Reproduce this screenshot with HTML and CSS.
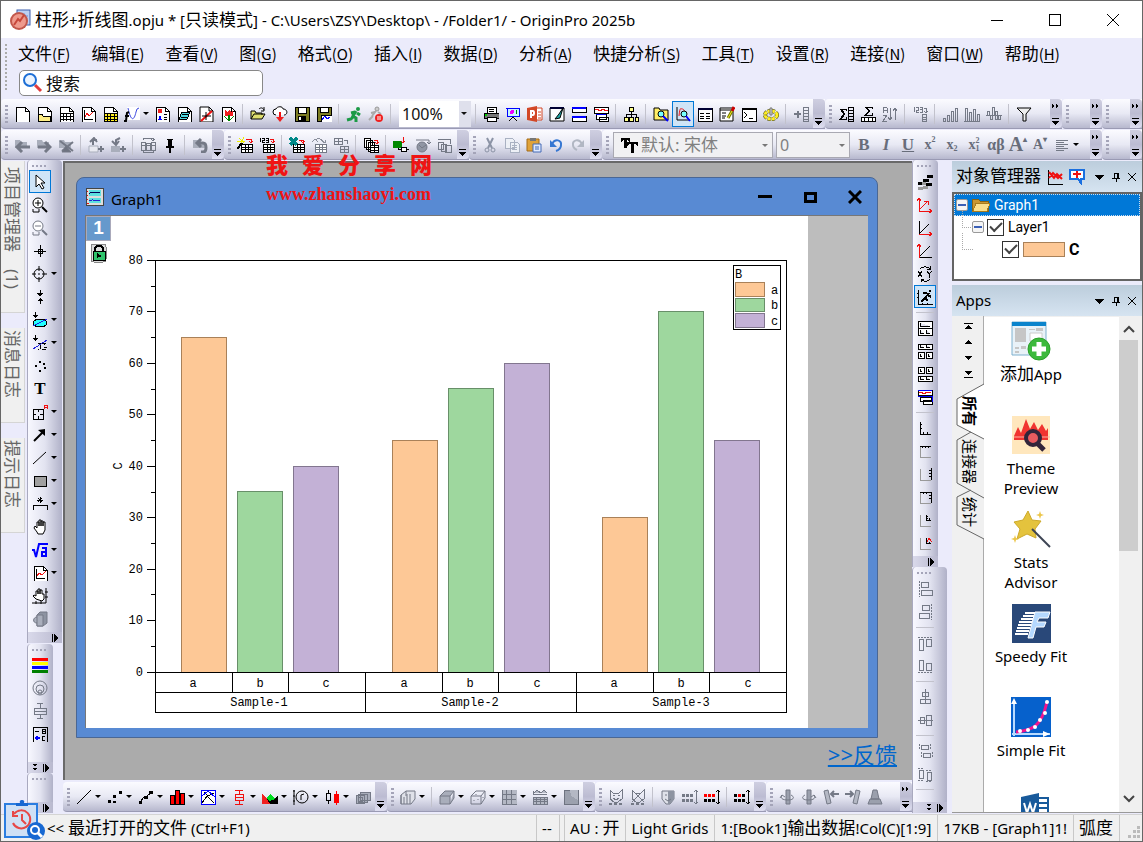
FILE: index.html
```html
<!DOCTYPE html>
<html lang="zh-CN">
<head>
<meta charset="utf-8">
<title>OriginPro 2025b</title>
<link rel="stylesheet" href="styles.css">
</head>
<body>
<svg class="defs" aria-hidden="true">
  <symbol id="doc" viewBox="0 0 16 16"><path class="w" d="M2 1h9l4 4v11H2z"/><path d="M11 1v4h4"/></symbol>
  <symbol id="folder" viewBox="0 0 16 16"><path d="M1 3h5l1 2h6v6H1z" fill="#a9aebb" stroke="none"/></symbol>
  <symbol id="mini" viewBox="0 0 16 16"><path class="w" d="M4 7h11v8H4zM4 10h11M4 12h11M8 7v8M11 7v8"/></symbol>
  <symbol id="more" viewBox="0 0 10 8"><path d="M1 1h7" /><path class="k" d="M1 4h7L4.500 8z"/></symbol>
  <symbol id="chev" viewBox="0 0 10 8"><path class="k" d="M1 1l3 2-3 2zM5 1l3 2-3 2z"/></symbol>
  <symbol id="side" viewBox="0 0 10 8"><path d="M2 0v8"/><path class="k" d="M4 0l4 4-4 4z"/></symbol>
</svg>
<div class="app">
<header class="title">
  <svg class="logo" width="22" height="22"><rect x="8" y="1" width="13" height="15" fill="#bcd0f3" stroke="#3c5fae"/><path d="M15 4v9M11 7h8" stroke="#6f8fd6"/><circle cx="10" cy="12" r="9" fill="#c2574b" stroke="none"/><circle cx="10" cy="12" r="7" fill="#ee9a8d" stroke="none"/><path d="M5 16l4-6 2 2 4-6" stroke="#c7473b" stroke-width="2" fill="none"/></svg>
  <h1><span class="zh">柱形</span>+<span class="zh">折线图</span>.opju * [<span class="zh">只读模式</span>] - C:\Users\ZSY\Desktop\ - /Folder1/ - OriginPro 2025b</h1>
  <button class="wb" aria-label="最小化"><svg width="14" height="14"><path d="M1 7h12"/></svg></button>
  <button class="wb" aria-label="最大化"><svg width="14" height="14"><path d="M1 1h11v11H1z"/></svg></button>
  <button class="wb x" aria-label="关闭"><svg width="14" height="14"><path d="M1 1l12 12M13 1L1 13"/></svg></button>
</header>

<div class="menus">
  <nav class="menubar">
    <button>文件<span>(<u>F</u>)</span></button><button>编辑<span>(<u>E</u>)</span></button><button>查看<span>(<u>V</u>)</span></button><button>图<span>(<u>G</u>)</span></button><button>格式<span>(<u>O</u>)</span></button><button>插入<span>(<u>I</u>)</span></button><button>数据<span>(<u>D</u>)</span></button><button>分析<span>(<u>A</u>)</span></button><button>快捷分析<span>(<u>S</u>)</span></button><button>工具<span>(<u>T</u>)</span></button><button>设置<span>(<u>R</u>)</span></button><button>连接<span>(<u>N</u>)</span></button><button>窗口<span>(<u>W</u>)</span></button><button>帮助<span>(<u>H</u>)</span></button>
  </nav>
  <label class="search"><svg width="20" height="20"><path d="M12 12l6 6" stroke="#e23b3b" stroke-width="3"/><circle cx="7" cy="7" r="6" fill="#eaf4ff" stroke="#1d6fd6" stroke-width="2"/></svg><input type="text" placeholder="搜索" aria-label="搜索"></label>
</div>

<div class="row">
  <div class="tb">
    <button class="b" title="新建"><svg class="i"><use href="#doc"/></svg></button>
    <button class="b" title="文件夹"><svg class="i"><use href="#doc"/><path fill="#ffee84" d="M2 8h4l1 2h7v5H2z"/></svg></button>
    <button class="b" title="工作簿"><svg class="i"><use href="#doc"/><path d="M2 7h13M2 10h13M2 13h13M5 7v8M8 7v8M12 7v8"/></svg></button>
    <button class="b" title="图"><svg class="i"><use href="#doc"/><path d="M4 4v9h9"/><path class="rs" d="M5 11l2-4 2 3 4-4"/></svg></button>
    <button class="b" title="矩阵"><svg class="i"><use href="#doc"/><path fill="#ffee22" d="M2 7h13v8H2zM2 10h13M2 13h13M5 7v8M8 7v8M12 7v8"/></svg></button>
    <button class="b d" title="函数"><svg class="i a"><path class="w n" d="M3 1h13v13H3z"/><path stroke="#3a46e0" d="M4 2c3 14 6 13 8 4l1-3 2-1"/><path stroke-width="2" d="M0 15h2l1-8 2-1M1 10h4"/></svg></button>
    <button class="b" title="布局"><svg class="i"><use href="#doc"/><path class="r" d="M4 3h4v4H4z"/><path fill="#00f" stroke="none" d="M4 14l2-5 2 5z"/><path d="M10 8h3M10 11h3M10 13h3"/></svg></button>
    <button class="b" title="备注"><svg class="i"><use href="#doc"/><path fill="#4fd8e0" d="M6 6h8l-3 7H3zM6 8h6M5 11h6"/></svg></button>
    <button class="b" title="函数图"><svg class="i a"><use href="#doc"/><path class="rs" d="M3 15L14 5" stroke-width="2"/><path d="M8 6v8M4 10h9"/></svg></button>
    <button class="b" title="图像"><svg class="i"><use href="#doc"/><path class="r" d="M5 4l2 2 2-2 2 2 2-2v6H5z"/><path fill="#080" stroke="none" d="M8 9h2v6H8zM4 10l4 3v2zM14 10l-4 3v2z"/></svg></button>
    <i class="s"></i>
    <button class="b" title="打开"><svg class="i a"><path fill="#dede6e" d="M1 13V5h4l1 2h6v2M1 13l3-5h11l-3 5z"/><path d="M9 3c2-2 4-1 5 1M14 1v4h-3"/></svg></button>
    <button class="b" title="云"><svg class="i a"><path class="w" d="M4 9a3 3 0 010-6c1-3 7-3 7 0 5 0 5 6 1 6"/><path class="rs" stroke-width="2" d="M8 6v8"/><path class="r" d="M4 11h8l-4 5z"/></svg></button>
    <button class="b" title="保存"><svg class="i"><path fill="#7d7d24" d="M1 1h14v14H1z"/><path class="w" d="M4 1h8v6H4z"/><path class="k" d="M4 10h8v5H4z"/><path class="w n" d="M5 11h2v3H5z"/></svg></button>
    <button class="b" title="保存模板"><svg class="i"><path fill="#7d7d24" d="M1 1h14v14H1z"/><path class="w" d="M4 1h8v5H4zM5 9h11v7H5z"/><path stroke="#00f" d="M6 14l3-4 2 3 3-2"/></svg></button>
    <i class="s"></i>
    <button class="b" title="运行"><svg class="i a"><circle cx="12" cy="3" r="2" fill="#1a9a45" stroke="none"/><path stroke="#1a9a45" stroke-width="3" d="M10 5L7 10l3 2v4M9 6L5 7M8 10l-3 3-4 1M11 7l3 2"/></svg></button>
    <button class="b" title="暂停"><svg class="i a"><circle cx="9" cy="3" r="2" fill="#ccc" stroke="#999"/><path stroke="#aaa" stroke-width="2" d="M8 5L4 10M7 6L3 7M5 10l-4 4M10 6l3 2"/><circle class="r" cx="11" cy="12" r="4"/><path stroke="#fff" d="M10 10v4M12 10v4"/></svg></button>
    <i class="s"></i>
    <span class="combo zoomc"><select aria-label="缩放"><option>100%</option></select></span>
    <i class="s"></i>
    <button class="b" title="打印"><svg class="i"><path class="w" d="M4 1h9v6H4zM6 3h5M6 5h5"/><path fill="#777" d="M1 7h15v5H1z"/><path class="w" d="M4 11h9v4H4z"/><path fill="#0c0" stroke="none" d="M2 8h2v2H2z"/></svg></button>
    <button class="b" title="演示"><svg class="i"><path fill="#c8f4ff" stroke="#00f" d="M2 2h12v8H2zM1 2h14M8 10v2"/><circle cx="7" cy="6" r="2" fill="#e0f" stroke="none"/><path d="M4 15l4-4 4 4"/><path stroke="#080" d="M11 4v4"/></svg></button>
    <button class="b" title="PowerPoint"><svg class="i a"><path fill="#fff" stroke="#d24726" d="M9 2h6v12H9"/><path stroke="#d24726" d="M11 6h3M11 9h3M11 12h3"/><path fill="#d24726" stroke="none" d="M0 2l10-2v16L0 14z"/><path stroke="#fff" stroke-width="2" d="M4 12V5h2a1 2 0 010 4H4"/></svg></button>
    <button class="b" title="编辑"><svg class="i a"><path class="w" d="M1 2h14v13H1z"/><path stroke="#003" stroke-width="2" d="M1 2h14"/><path fill="#2aa" d="M14 2l-4 6-4 5 5-1z"/></svg></button>
    <button class="b" title="水平拆分"><svg class="i"><path class="w" d="M1 1h14v5H1zM1 10h14v5H1z"/><path stroke="#00f" stroke-width="2" d="M1 2h14M1 11h14"/></svg></button>
    <button class="b" title="合并图"><svg class="i"><path class="w" d="M1 1h14v6H1zM3 8h10v5H3zM6 11h9v4H6z"/><path class="rs" d="M2 4l2-1 3 2 3-2 3 2 2-1"/><path stroke="#00f" d="M3 8h10"/></svg></button>
    <i class="s"></i>
    <button class="b" title="结构"><svg class="i"><path fill="#ff8" d="M6 1h4v4H6zM1 11h4v4H1zM6 11h4v4H6zM12 11h3v4h-3z"/><path d="M8 5v6M3 11V8h10v3"/></svg></button>
    <i class="s"></i>
    <button class="b" title="浏览"><svg class="i a"><path fill="#ffee66" d="M1 14V2h5l1 2h8v10z"/><circle cx="8" cy="8" r="3" fill="#7ff"/><path stroke="#00f" stroke-width="2" d="M10 10l5 5"/></svg></button>
    <button class="b on" title="查看图"><svg class="i a"><path d="M2 1v13h13"/><path class="rs" d="M4 10c1-10 2-7 3-7s2 0 4 5"/><circle cx="9" cy="8" r="3" fill="#7ff"/><path stroke="#00f" stroke-width="2" d="M11 10l4 5"/></svg></button>
    <button class="b" title="结果"><svg class="i"><path class="w" d="M1 2h14v13H1z"/><path stroke="#003" stroke-width="2" d="M1 3h14"/><path d="M3 7h4M9 7h4M3 10h4M9 10h4M3 12h4M9 12h4"/></svg></button>
    <button class="b" title="日志"><svg class="i a"><path class="w" d="M1 2h13v13H1zM1 4h13M3 7h4M3 10h4M3 12h3"/><path stroke="#c00" stroke-width="3" d="M15 1l-2 4"/><path stroke="#770" stroke-width="3" d="M13 5l-4 7"/><path stroke="#ee2" d="M13 5l-4 7"/></svg></button>
    <button class="b" title="命令"><svg class="i"><path class="w" d="M1 2h14v13H1z"/><path stroke-width="2" d="M1 3h14"/><path d="M3 6l3 3-3 3M8 12h4"/></svg></button>
    <button class="b" title="代码"><svg class="i a"><ellipse cx="8" cy="9" rx="6" ry="4" stroke="#444400" stroke-width="4" stroke-dasharray="3 1"/><ellipse cx="8" cy="9" rx="6" ry="4" stroke="#ffee22" stroke-width="3" stroke-dasharray="3 1"/><path fill="#ddd" stroke="#777" d="M7 2h2v7H7z"/></svg></button>
    <i class="s"></i>
    <button class="b" title="添加列"><svg class="i g"><path stroke-width="2" d="M1 8h7M5 5v7"/><path d="M10 1h5v14h-5zM10 4h5M10 7h5M10 10h5M10 13h5"/></svg></button>
    <button class="cap" aria-label="更多"><svg width="10" height="8"><use href="#more"/></svg></button>
  </div>
  <div class="tb grow">
    <button class="b" title="列统计"><svg class="i"><path d="M8 5V3H2l4 5-4 5h6v-2M3 3l4 5-4 5"/><path d="M10 1h5v14h-5zM10 4h5M10 7h5M10 10h5M10 13h5"/></svg></button>
    <button class="b" title="行统计"><svg class="i"><path d="M12 3V1H5l4 4-4 4h7V7M6 1l4 4-4 4"/><path class="w" d="M1 11h14v4H1zM4 11v4M8 11v4M12 11v4"/></svg></button>
    <button class="b" title="排序"><svg class="i g"><path d="M1 7V2l2-1 2 1v5M1 4h4M1 9h4l-4 6h4M8 2v12M6 11l2 3 2-3M13 2v12M11 5l2-3 2 3"/></svg></button>
    <i class="s"></i>
    <button class="b" title="编号"><svg class="i g"><path d="M2 1v5M4 1h2v3H4v2h3M8 1h2v5H8M8 3h2M12 2h2v4M12 5l2 2 2-2M10 8h4v7h-4zM10 11h4M10 13h4"/></svg></button>
    <i class="s"></i>
    <button class="b" title="升序"><svg class="i g"><path d="M1 12h2v3H1zM5 9h2v6H5zM9 5h2v10H9zM13 2h2v13h-2z"/></svg></button>
    <button class="b" title="条形"><svg class="i g"><path d="M1 2h2v13H1zM5 6h2v9H5zM9 3h2v12H9zM13 8h2v7h-2zM0 15h16"/></svg></button>
    <button class="b" title="正态"><svg class="i g"><path d="M0 9h16M1 5h2v4H1zM4 9h2v4H4zM6 1h2v8H6zM9 5h2v8H9zM12 9h2v4h-2z"/></svg></button>
    <i class="s"></i>
    <button class="b" title="筛选"><svg class="i a"><path fill="#eee" d="M1 2h14L10 8v7H7V8z"/></svg></button>
    <button class="cap two" aria-label="更多"><svg width="10" height="8"><use href="#chev"/></svg><svg width="10" height="8"><use href="#more"/></svg></button>
  </div>
  <div class="tb tiny"><button class="cap two" aria-label="更多"><svg width="10" height="8"><use href="#chev"/></svg><svg width="10" height="8"><use href="#more"/></svg></button></div>
  <div class="tb tiny"><button class="cap two" aria-label="更多"><svg width="10" height="8"><use href="#chev"/></svg><svg width="10" height="8"><use href="#more"/></svg></button></div>
</div>

<div class="row">
  <div class="tb">
    <button class="b" title="后退"><svg class="i g a"><use href="#folder"/><path stroke-width="3" d="M3 10h13M8 5l-5 5 5 5"/></svg></button>
    <button class="b" title="前进"><svg class="i g a"><use href="#folder"/><path stroke-width="3" d="M2 10h12M9 5l5 5-5 5"/></svg></button>
    <button class="b" title="上级"><svg class="i g a"><use href="#folder"/><path stroke-width="2" d="M2 4l13 10M4 14L15 5"/><path fill="#6e7380" d="M4 15l4-6 5 6z"/></svg></button>
    <i class="s"></i>
    <button class="b" title="导出"><svg class="i g a"><path class="w" stroke="#a9aebb" d="M1 9h9v6H1z"/><path stroke-width="2" d="M5 8V3h4M2 5l4-4 3 4M10 12h6M13 9v6"/></svg></button>
    <button class="b" title="导入"><svg class="i g a"><path fill="#a9aebb" stroke="none" d="M1 9h9v6H1z"/><path stroke-width="2" d="M10 1L6 3v4M2 4l4 4 3-4M10 12h6M13 9v6"/></svg></button>
    <i class="s"></i>
    <button class="b" title="交换"><svg class="i g"><path d="M1 5h4v8H1zM6 6h4v7H6zM11 5h4v8h-4zM1 8h14M3 3V1h10v3M13 13v2H3v-2M11 2l2 2 2-2"/></svg></button>
    <button class="b" title="固定"><svg class="i"><path class="k" d="M5 2h6v1h-1v6h2v2H4V9h2V3H5zM7 11h2v5H7z"/></svg></button>
    <i class="s"></i>
    <button class="b" title="返回"><svg class="i g a"><use href="#folder"/><path stroke-width="3" d="M5 6h6c4 0 4 9 0 9H9M9 2L5 6l4 4"/></svg></button>
    <button class="cap" aria-label="更多"><svg width="10" height="8"><use href="#more"/></svg></button>
  </div>
  <div class="tb">
    <button class="b" title="导入向导"><svg class="i"><path stroke="#ee0" d="M2 1l5 5M7 0L4 7M0 4h8"/><path stroke-width="2" d="M0 12l5-6"/><use href="#mini"/><path class="rs" d="M9 2h5v4M12 4l2 2 2-2"/></svg></button>
    <button class="b" title="导入ASCII"><svg class="i"><path d="M1 1v4M3 1h2v2H3v2h3M7 1h2v4H7M7 3h2"/><use href="#mini"/><path class="rs" d="M11 2h3v4M12 4l2 2 2-2"/></svg></button>
    <i class="s"></i>
    <button class="b" title="Excel"><svg class="i"><use href="#mini"/><path stroke="#088" stroke-width="3" d="M1 1l7 7M8 1L1 8"/><path class="rs" d="M10 3h4v4M12 4l2 2 2-2"/></svg></button>
    <button class="b" title="重新导入"><svg class="i g"><use href="#mini"/><path stroke="#8a8f9c" d="M1 5l3-3 3 3M4 3l4-2 4 3M10 3l4 3 1-3"/></svg></button>
    <button class="b" title="导入表"><svg class="i g"><path d="M1 1h8v6H1zM1 4h8M5 1v6M11 3h3v4M7 9h8v6H7zM7 12h8M11 9v6"/></svg></button>
    <i class="s"></i>
    <button class="b" title="批处理"><svg class="i"><path class="w" d="M1 1h6v9H1zM3 3h6v9H3zM5 5h6v9H5z"/><path class="w" d="M7 8h8v7H7zM7 10h8M7 13h8M11 8v7"/><path class="rs" d="M11 3h3v4M12 5l2 2 2-2"/></svg></button>
    <i class="s"></i>
    <button class="b" title="数据连接"><svg class="i"><path fill="#080" stroke="none" d="M0 4h9v7H0z"/><path fill="#fff" d="M8 10h5v4H8z"/><path d="M13 12h3M5 11v1h3"/><path class="rs" d="M10 0v6M8 4l2 2 2-2"/></svg></button>
    <button class="b" title="连接地图"><svg class="i g a"><circle cx="7" cy="10" r="5" fill="#9096a4"/><path d="M4 8l3 3 4-3M1 3h13v4M12 5l2 2 2-2"/></svg></button>
    <button class="b" title="复制图"><svg class="i g"><path d="M1 2h12v5M1 5h5v7H1zM4 7h5v7H4zM8 8h6v7H8z"/></svg></button>
    <button class="cap" aria-label="更多"><svg width="10" height="8"><use href="#more"/></svg></button>
  </div>
  <div class="tb">
    <button class="b" title="剪切"><svg class="i a"><path stroke="#8b93a5" stroke-width="2" d="M5 1l5 10M11 1L6 11"/><circle cx="5" cy="13" r="2" stroke="#8b93a5"/><circle cx="11" cy="13" r="2" stroke="#8b93a5"/></svg></button>
    <button class="b" title="复制"><svg class="i"><path fill="#edf0f6" stroke="#a9b1c2" d="M1 1h7l2 2v8H1zM6 5h7l2 2v8H6zM8 8h5M8 10h5M8 12h5"/></svg></button>
    <button class="b" title="粘贴"><svg class="i a"><path fill="#e0a33a" stroke="#a36a17" d="M1 2h12v12H1z"/><path fill="#777" stroke="none" d="M4 1h6v3H4z"/><path fill="#dfeaff" stroke="#456bb5" d="M7 7h8v8H7zM9 10h4M9 12h4"/></svg></button>
    <button class="b" title="撤消"><svg class="i a"><path stroke="#3677d2" stroke-width="2" d="M4 7c3-6 10-4 9 1 0 3-2 5-5 6"/><path fill="#3677d2" stroke="none" d="M2 3v7h7z"/></svg></button>
    <button class="b" title="重做"><svg class="i a"><path stroke="#b1b7c3" stroke-width="2" d="M12 7C9 1 2 3 3 8c0 3 2 4 4 5"/><path fill="#b1b7c3" stroke="none" d="M14 3v7H7z"/></svg></button>
    <button class="cap" aria-label="更多"><svg width="10" height="8"><use href="#more"/></svg></button>
  </div>
  <div class="tb grow">
    <label class="combo off font"><svg width="18" height="16"><path d="M1 1h9v4H9L8 3H7v8H4V3H3L2 5H1zM7 5h11v4h-1l-1-2h-2v9h-3V7H9L8 9H7z" class="k"/></svg><select aria-label="字体" disabled><option>默认: 宋体</option></select></label>
    <span class="combo off size"><select aria-label="字号" disabled><option>0</option></select></span>
    <button class="b t"><b>B</b></button><button class="b t"><b><em>I</em></b></button><button class="b t"><b><u>U</u></b></button><button class="b t s2">x<sup>2</sup></button><button class="b t s2">x<sub>2</sub></button><button class="b t s2">x<span class="ss"><sup>2</sup><sub>1</sub></span></button><button class="b t s3">αβ</button><button class="b t s4">A<sup>▴</sup></button><button class="b t s2">A<sup>▾</sup></button>
    <button class="b d" title="对齐"><svg class="i g"><path d="M2 3h12M2 5h8M2 7h12M2 9h8M2 11h12M2 13h8"/></svg></button>
    <button class="cap two" aria-label="更多"><svg width="10" height="8"><use href="#chev"/></svg><svg width="10" height="8"><use href="#more"/></svg></button>
  </div>
  <div class="tb tiny"><button class="cap two" aria-label="更多"><svg width="10" height="8"><use href="#chev"/></svg><svg width="10" height="8"><use href="#more"/></svg></button></div>
</div>

<main class="main">
  <aside class="dock">
    <button class="d1">项目管理器　(1)</button>
    <button>消息日志</button>
    <button>提示日志</button>
  </aside>

  <div class="vcol left">
    <div class="vt wide">
      <button class="b on" title="指针"><svg class="i a"><path class="w" d="M4 1v12l3-3 3 5 2-1-3-5h4z"/></svg></button>
      <button class="b" title="放大"><svg class="i a"><circle cx="6" cy="6" r="5" fill="#fff"/><path d="M3 6h6M6 3v6M1 15h6v-3M1 12v3"/><path stroke-width="2" d="M10 10l5 5"/></svg></button>
      <button class="b" title="缩小"><svg class="i a g"><circle cx="6" cy="6" r="5" fill="#fff"/><path d="M3 6h6M1 15h6v-3M1 12v3"/><path stroke-width="2" d="M10 10l5 5"/></svg></button>
      <button class="b" title="屏幕读取"><svg class="i"><path d="M8 2v12M2 8h12M6 6h4v4H6z"/></svg></button>
      <button class="b d" title="数据读取"><svg class="i a"><circle cx="7" cy="8" r="5"/><path d="M7 0v5M7 11v5M0 8h4M10 8h5M6 8h2"/></svg></button>
      <button class="b" title="数据选择"><svg class="i"><path d="M8 1v5M8 10v5"/><path class="k" d="M5 4h6L8 8zM5 12h6L8 9z"/></svg></button>
      <button class="b d" title="区域"><svg class="i"><path d="M3 0v4"/><path class="k" d="M0 3h6L3 6z"/><ellipse cx="8" cy="11" rx="7" ry="4" fill="#2ff"/><path stroke="#22d" d="M1 14L15 7"/></svg></button>
      <button class="b d" title="屏蔽"><svg class="i"><path d="M3 0v4M6 8h8M8 8v6M12 9v1M10 14h4M6 14h1M12 12h3"/><path class="k" d="M0 3h6L3 6z"/><path stroke="#22d" d="M1 14L15 5"/></svg></button>
      <button class="b" title="绘制数据"><svg class="i"><path class="k" d="M3 7h2v2H3zM7 3h2v2H7zM11 5h2v2h-2zM12 9h2v2h-2zM7 12h2v2H7z"/></svg></button>
      <button class="b t tt">T</button>
      <button class="b d" title="注释"><svg class="i"><path d="M1 5h10v10H1zM1 10h3M8 10h3M6 5v3M6 12v3"/><path class="rs" d="M12 5V1h3v4M12 3h3"/></svg></button>
      <button class="b d" title="箭头"><svg class="i a"><path stroke-width="2" d="M2 14l9-9"/><path class="k" d="M13 2v7L6 3z"/></svg></button>
      <button class="b d" title="直线"><svg class="i a"><path d="M1 14L14 2"/></svg></button>
      <button class="b d" title="矩形"><svg class="i"><path fill="#a0a0a0" d="M2 3h12v10H2z"/></svg></button>
      <button class="b d" title="括号"><svg class="i"><path d="M1 14V9h14v5M8 1v6M5 4h6M6 2l4 4M10 2L6 6"/></svg></button>
      <button class="b" title="平移"><svg class="i a"><path class="w" d="M5 13L2 9l1-2 2 2V3h2v4-6h2v6-5h2v5-4h2v8l-2 4H6z"/></svg></button>
      <button class="b d" title="公式"><svg class="i a"><path stroke="#00f" stroke-width="2" d="M0 8h2l2 7L7 2h9M10 6h4v8h-4v-4h4"/></svg></button>
      <button class="b d" title="插入图"><svg class="i"><use href="#doc"/><path d="M4 4v9h9"/><path class="rs" d="M5 11l2-3 3 2 4-4"/></svg></button>
      <button class="b" title="缩放平移"><svg class="i a"><path class="w" d="M4 11L1 8l1-1 2 1V3h2v3-5h2v5-4h2v4h2v5l-2 2z"/><path d="M14 0v15H0M13 4h3M13 9h3M4 13v3M9 13v3"/></svg></button>
      <button class="b" title="旋转"><svg class="i g a"><path fill="#8d93a1" d="M5 4l3-3h7v11l-4 3H5z"/><path fill="#a9aebb" d="M5 4h6v11H5zM5 12C0 12 1 6 5 6"/></svg></button>
      <div class="vcap"><svg width="10" height="8"><use href="#side"/></svg></div>
    </div>
    <div class="vt v2">
      <button class="b" title="颜色"><svg class="i"><path stroke-width="3" stroke="red" d="M0 2h16"/><path stroke-width="3" stroke="#ff0" d="M0 6h16"/><path stroke-width="3" stroke="#00f" d="M0 10h16"/><path stroke-width="3" stroke="green" d="M0 14h16"/></svg></button>
      <button class="b" title="气泡"><svg class="i g a"><circle cx="8" cy="8" r="7"/><circle cx="8" cy="9" r="4"/><circle cx="8" cy="12" r="2"/></svg></button>
      <button class="b" title="箱线"><svg class="i g"><path d="M8 0v5M8 11v4M5 0h6M5 15h6M2 5h12v6H2zM2 8h12"/></svg></button>
      <button class="b" title="图例"><svg class="i"><path d="M1 16V1h14v15M3 5h4M10 3h3v4h-3zM10 5h3M13 10h-3v4h3"/><path stroke="#00f" stroke-width="2" d="M3 12h5M5 10v4"/></svg></button>
      <div class="vcap"><svg width="8" height="8"><path class="k" d="M2 0h4L4 3zM2 4h4L4 7z"/></svg><svg width="10" height="8"><use href="#side"/></svg></div>
    </div>
    <div class="vt v3"><div class="vcap"><svg width="8" height="8"><path class="k" d="M2 0h4L4 3zM2 4h4L4 7z"/></svg><svg width="10" height="8"><use href="#side"/></svg></div></div>
  </div>

  <section class="center">
    <div class="space">
      <article class="win">
        <header>
          <svg width="20" height="20"><path fill="#ddd" stroke="#444" d="M1 1h17v17H1z"/><path fill="#5de0e0" stroke="none" d="M4 3h12v6H4zM4 11h12v5H4z"/><path d="M4 7c3-4 6 0 11-2" stroke="#005" fill="none"/><path d="M4 14c4-3 6 1 11-1" stroke="#22c" fill="none"/><path class="rs" d="M2 4h1M2 8h1M2 12h1M2 16h2"/></svg>
          <h2>Graph1</h2>
          <button aria-label="最小化"><svg width="14" height="14"><path d="M0 6h14" stroke-width="3"/></svg></button>
          <button aria-label="最大化"><svg width="14" height="14"><path d="M2 3h10v8H2z" stroke-width="3"/></svg></button>
          <button class="x" aria-label="关闭"><svg width="14" height="14"><path d="M1 1l12 12M13 1L1 13" stroke-width="3"/></svg></button>
        </header>
        <div class="canvas">
          <div class="page">
            <span class="badge">1</span>
            <svg class="lock" width="18" height="20"><rect x="1" y="1" width="15" height="18" rx="3" fill="#ddd" stroke="#888"/><path d="M5 8V5l2-2h4l2 2v3" fill="none" stroke="#000" stroke-width="2"/><path fill="#2fc46c" stroke="#000" d="M3 8h12v9H3z"/><path class="k" d="M7 10v5l5-2z"/></svg>
            <svg class="chart" viewBox="0 0 722 512" role="img" aria-label="柱状图">
              <g stroke-width="1">
                <g fill="#fdc896" stroke="#a98159"><path d="M95 456V121h45v335zM306 456V224h45v232zM516 456V301h45v155z"/></g>
                <g fill="#9ed79e" stroke="#688f69"><path d="M151 456V275h45v181zM362 456V172h45v284zM572 456V95h45v361z"/></g>
                <g fill="#c3b1d6" stroke="#82768f"><path d="M207 456V250h45v206zM418 456V147h45v309zM628 456V224h45v232z"/></g>
              </g>
              <path class="ax" d="M69 44h631v452H69zM69 456h631M69 476h631M146 456v20M202 456v20M279 456v40M356 456v20M412 456v20M490 456v40M567 456v20M623 456v20"/>
              <path class="ax" d="M61 44h8M61 95h8M61 147h8M61 198h8M61 250h8M61 301h8M61 353h8M61 404h8M61 456h8M65 70h4M65 121h4M65 173h4M65 224h4M65 276h4M65 327h4M65 378h4M65 430h4"/>
              <g text-anchor="end"><text x="57" y="48">80</text><text x="57" y="99">70</text><text x="57" y="151">60</text><text x="57" y="202">50</text><text x="57" y="254">40</text><text x="57" y="305">30</text><text x="57" y="357">20</text><text x="57" y="408">10</text><text x="57" y="460">0</text></g>
              <g text-anchor="middle"><text x="107" y="471">a</text><text x="174" y="471">b</text><text x="240" y="471">c</text><text x="318" y="471">a</text><text x="384" y="471">b</text><text x="451" y="471">c</text><text x="528" y="471">a</text><text x="595" y="471">b</text><text x="662" y="471">c</text><text x="173" y="490">Sample-1</text><text x="384" y="490">Sample-2</text><text x="595" y="490">Sample-3</text><text transform="translate(36 250) rotate(-90)">C</text></g>
              <path class="ax" fill="#fff" d="M647 49h47v64h-47z"/>
              <path fill="#fdc896" stroke="#a98159" d="M649 66h29v14h-29z"/><path fill="#9ed79e" stroke="#688f69" d="M649 82h29v13h-29z"/><path fill="#c3b1d6" stroke="#82768f" d="M649 97h29v14h-29z"/>
              <text x="649" y="62">B</text><text x="685" y="78">a</text><text x="685" y="93">b</text><text x="685" y="109">c</text>
            </svg>
          </div>
        </div>
      </article>
      <a class="fb" href="#">&gt;&gt;反馈</a>
    </div>
    <div class="row bottom">
      <div class="tb">
        <button class="b d" title="折线"><svg class="i a"><path d="M1 15L15 1"/></svg></button>
        <button class="b d" title="散点"><svg class="i"><path class="k" d="M1 11h3v3H1zM6 6h3v3H6zM6 12h3v2H6zM12 2h3v3h-3z"/></svg></button>
        <button class="b d" title="点线"><svg class="i"><path d="M2 13l4-5 3-1 5-4"/><path class="k" d="M1 12h3v3H1zM6 7h4v3H6zM11 2h4v3h-4z"/></svg></button>
        <button class="b d" title="柱状"><svg class="i"><path fill="red" d="M1 6h4v9H1zM6 1h4v14H6zM11 4h4v11h-4z"/></svg></button>
        <button class="b d" title="统计"><svg class="i"><path fill="#fff" stroke="#00f" d="M1 1h14v14H1z"/><path d="M2 14l5-7 7 7M4 3l4 4 6-3"/><path stroke="#00f" d="M1 8l7-6 7 6"/></svg></button>
        <button class="b d" title="箱线"><svg class="i"><path class="rs" d="M8 1v5M8 11v4M4 1h8M4 15h8M4 5h8v6H4zM4 8h8"/></svg></button>
        <button class="b d" title="面积"><svg class="i"><path class="k" d="M0 6l4 5 4-6 5 4 3-2v8H0z"/><path class="r" d="M0 5l5 5 3 5H0z"/><path fill="#0d2" stroke="none" d="M4 9l4-4 5 5-5 2z"/></svg></button>
        <button class="b d" title="极坐标"><svg class="i a"><path d="M1 1v15M0 2h2M0 7h2M0 12h2M8 11V6l3-1"/><circle cx="9" cy="8" r="6"/></svg></button>
        <button class="b d" title="K线"><svg class="i"><path d="M4 1v3M4 11v4M2 4h4v7H2z"/><path fill="red" stroke="red" d="M12 2v14M10 5h4v8h-4z"/></svg></button>
        <button class="b" title="三维"><svg class="i g"><path fill="#a9aebb" d="M5 3h10v8H5zM3 5h9v8H3zM1 6h8v8H1zM3 8h4v4H3z"/></svg></button>
        <button class="cap" aria-label="更多"><svg width="10" height="8"><use href="#more"/></svg></button>
      </div>
      <div class="tb">
        <button class="b d" title="三维柱状"><svg class="i g a"><path fill="#dfe1e9" d="M1 6l5-4h9v8l-4 5H1zM1 6v9M4 8v7M7 5v10M10 5v10M6 2v5"/></svg></button><i class="s"></i>
        <button class="b d" title="三维曲面"><svg class="i g a"><path fill="#a9aebb" d="M1 7l5-5h9l-4 5zM1 7v8h10V7M11 15l4-6V2"/></svg></button>
        <button class="b d" title="三维散点"><svg class="i g a"><path d="M1 7l5-5h9v7l-4 6H1zM1 7h10v8M11 7l4-5M6 5v1M4 11v1M8 10v1M13 8v1"/></svg></button>
        <button class="b d" title="热图"><svg class="i g"><path fill="#b4b8c4" stroke="none" d="M1 1h15v14H1z"/><path d="M1 1v14h15M1 5h14M1 10h14M5 1v14M10 1v14"/></svg></button>
        <button class="b d" title="剖面"><svg class="i g"><path fill="#b4b8c4" d="M1 8h14v7H1zM1 10h14M1 12h14M4 8v7M8 8v7M12 8v7M1 5h14M2 4l3-3 4 3 3-3 3 3M1 2v4"/></svg></button>
        <button class="b" title="图像"><svg class="i"><path fill="#9ca1ae" stroke="#6e7380" d="M1 1h14v14H1z"/><path fill="#b4b8c4" stroke="none" d="M7 1h8v10l-7-4z"/></svg></button>
        <button class="cap" aria-label="更多"><svg width="10" height="8"><use href="#more"/></svg></button>
      </div>
      <div class="tb">
        <button class="b" title="遮罩"><svg class="i g"><path d="M2 1l3 3h6l3-3v9l-4 3H6l-4-3zM5 6h2M10 6h2M5 9l3 2 3-2"/><path stroke-width="2" stroke-dasharray="3 2" d="M1 15h15"/></svg></button>
        <button class="b" title="取消遮罩"><svg class="i g"><path d="M2 1l3 3h6l3-3v9l-4 3H6l-4-3zM2 1l12 12M14 1L2 13"/><path stroke-width="2" stroke-dasharray="3 2" d="M1 15h15"/></svg></button><i class="s"></i>
        <button class="b" title="切换"><svg class="i g a"><path fill="#dfe1e9" d="M2 2h12v8l-4 5H6l-4-5z"/><path fill="#8d93a1" stroke="none" d="M8 2h6v8l-4 5H8z"/><path d="M5 6h2M5 10l3 2 3-2"/></svg></button>
        <button class="b" title="交换"><svg class="i g"><path stroke-width="3" stroke-dasharray="3 1" d="M0 6h11M0 11h11"/><path d="M14 1v14M12 3l2-2 2 2M12 13l2 2 2-2"/></svg></button>
        <button class="b" title="红"><svg class="i"><path stroke-width="3" stroke-dasharray="3 1" stroke="red" d="M0 6h11"/><path stroke-width="3" stroke-dasharray="3 1" d="M0 11h11"/><path d="M14 1v14M12 3l2-2 2 2M12 13l2 2 2-2"/></svg></button><i class="s"></i>
        <button class="b" title="黑"><svg class="i"><path stroke-width="3" stroke-dasharray="3 1" d="M0 6h11M0 11h11"/><path stroke-width="3" stroke="red" d="M4 6h3"/><path d="M14 1v14M12 3l2-2 2 2M12 13l2 2 2-2"/></svg></button>
        <button class="cap" aria-label="更多"><svg width="10" height="8"><use href="#more"/></svg></button>
      </div>
      <div class="tb grow">
        <button class="b" title="左转"><svg class="i g a"><path fill="#9ba0ad" d="M7 1h4v14H7z"/><path d="M12 6c4 2 3 5-3 5S1 9 3 6M1 9l2-3 3 2"/></svg></button>
        <button class="b" title="右转"><svg class="i g a"><path fill="#9ba0ad" d="M6 1h4v14H6z"/><path d="M4 6c-4 2-3 5 3 5s8-2 6-5M15 9l-2-3-3 2"/></svg></button>
        <button class="b" title="左倾"><svg class="i g a"><path fill="#b4b8c4" d="M1 2l4-1 3 13-4 1z"/><path stroke-width="2" d="M8 5h8M11 2L8 5l3 3"/></svg></button>
        <button class="b" title="右倾"><svg class="i g a"><path fill="#b4b8c4" d="M15 2l-4-1-3 13 4 1z"/><path stroke-width="2" d="M0 5h8M5 2l3 3-3 3"/></svg></button>
        <button class="b" title="透视"><svg class="i g a"><path fill="#9ba0ad" d="M6 1h4l2 9H4zM3 10h10l2 5H1z"/></svg></button>
        <button class="cap two" aria-label="更多"><svg width="10" height="8"><use href="#chev"/></svg><svg width="10" height="8"><use href="#more"/></svg></button>
      </div>
    </div>
  </section>

  <div class="vcol right">
    <div class="vt">
      <button class="b" title="抗锯齿"><svg class="i"><path stroke-width="3" d="M10 2h6M6 6h6M1 9h6M9 10h6"/><path stroke="#999" stroke-width="3" d="M5 9h4M1 14h5M6 13h5"/></svg></button>
      <button class="b" title="缩放轴"><svg class="i rx"><path d="M2 1v13h13M3 12l8-8M11 8V4H7M0 4l2-3 2 3M12 12l3 2-3 2"/></svg></button>
      <button class="b" title="缩放X"><svg class="i"><path d="M2 1v13M3 13l9-9"/><path class="rs" d="M2 14h13M12 12l3 2-3 2"/></svg></button>
      <button class="b" title="缩放Y"><svg class="i"><path d="M2 14h13M3 13l10-10"/><path class="rs" d="M2 15V1M0 4l2-3 2 3"/></svg></button>
      <button class="b" title="交换XY"><svg class="i"><path d="M1 5l4 6M5 5l-4 6M10 5l2 3 3-3M12 8v4M3 3c2-3 8-3 10 0M13 0v3h-3M13 13c-2 3-7 3-9 0M4 16v-3h3"/></svg></button>
      <button class="b on" title="快速"><svg class="i"><path d="M1 1v14h15M0 4h2M0 8h2M5 14v2M10 14v2"/><circle class="k" cx="13" cy="2" r="1"/><path stroke-width="2" d="M12 4L8 9l3 3M10 4H6M8 9l-4 4M11 6l3 2"/></svg></button>
      <i class="s"></i>
      <button class="b" title="图层1"><svg class="i"><path class="w" d="M1 1h14v14H1zM1 8h14M3 3v3h10M3 10v3h4M9 10v3h4"/></svg></button>
      <button class="b" title="图层2"><svg class="i"><path class="w" d="M1 1h14v5H1zM1 9h6v6H1zM9 9h6v6H9zM3 2v2h4M9 2v2h4M3 11v2h2M11 11v2h2"/></svg></button>
      <button class="b" title="图层4"><svg class="i"><path class="w" d="M1 1h6v6H1zM9 1h6v6H9zM1 10h14v5H1zM3 3v2h2M11 3v2h2M3 11v2h4M9 11v2h4"/></svg></button>
      <button class="b" title="合并"><svg class="i"><path class="w" d="M1 1h14v5H1zM3 8h11v4H3zM6 11h9v4H6z"/><path class="rs" d="M2 4l2-1 3 2 3-2 4 1"/><path stroke="#00f" d="M1 1h14M1 7h14v6"/></svg></button>
      <i class="s"></i>
      <button class="b" title="左下"><svg class="i"><path d="M3 2v12h11M3 4h2M3 8h2M6 12v2M10 12v2"/></svg></button>
      <button class="b" title="上"><svg class="i"><path stroke="#999" d="M3 3v11h11"/><path d="M3 3h11M5 3v2M8 3v2M11 3v2"/></svg></button>
      <button class="b" title="右"><svg class="i"><path stroke="#999" d="M3 3v11h11"/><path d="M14 2v12M12 4h2M12 7h2M12 10h2"/></svg></button>
      <button class="b" title="上右"><svg class="i"><path stroke="#999" d="M3 3v11h11"/><path d="M3 3h11v11M6 3v2M9 3v2M12 6h2M12 9h2"/></svg></button>
      <button class="b" title="嵌入"><svg class="i"><path stroke="#999" d="M3 3v11h11"/><path d="M9 3v5h5M9 4h2M9 6h2M12 6v2"/></svg></button>
      <button class="b" title="嵌入数据"><svg class="i"><path stroke="#999" d="M3 3v11h11"/><path d="M9 3v5h5M9 4h1M9 6h1M12 7v2"/><path class="rs" d="M10 7l2-4 3 4"/></svg></button>
      <div class="vcap"><svg width="10" height="8"><use href="#side"/></svg></div>
    </div>
    <div class="vt wide v4">
      <button class="b" title="左对齐"><svg class="i g"><path d="M4 1h7v5H4zM4 9h11v5H4z"/><path stroke-dasharray="2 1" d="M2 0v16"/></svg></button>
      <button class="b" title="右对齐"><svg class="i g"><path d="M5 1h7v5H5zM2 9h10v5H2z"/><path stroke-dasharray="2 1" d="M14 0v16"/></svg></button><i class="s"></i>
      <button class="b" title="顶对齐"><svg class="i g"><path d="M2 4h4v11H2zM9 4h5v7H9z"/><path stroke-dasharray="2 1" d="M1 2h15"/></svg></button>
      <button class="b" title="底对齐"><svg class="i g"><path d="M2 2h4v10H2zM9 5h5v7H9z"/><path stroke-dasharray="2 1" d="M1 14h15"/></svg></button><i class="s"></i>
      <button class="b" title="水平居中"><svg class="i g"><path d="M5 3h6v4H5zM3 10h10v4H3zM8 0v15"/></svg></button>
      <button class="b" title="垂直居中"><svg class="i g"><path d="M3 5h4v6H3zM9 3h5v10H9zM1 8h15"/></svg></button><i class="s"></i>
      <button class="b" title="等宽"><svg class="i g"><path d="M4 2h7v4H4zM6 10h7v4H6z"/><path stroke-dasharray="2 1" d="M2 1v6M13 1v6M4 9v6M15 9v6"/></svg></button>
      <button class="b" title="等高"><svg class="i g"><path d="M2 4h4v8H2zM10 6h4v8h-4z"/><path stroke-dasharray="2 1" d="M1 2h6M1 14h6M9 4h6M9 15h6"/></svg></button><i class="s"></i>
      <div class="vcap"><svg width="8" height="8"><path class="k" d="M2 0h4L4 3zM2 4h4L4 7z"/></svg><svg width="10" height="8"><use href="#side"/></svg></div>
    </div>
  </div>

  <aside class="panels">
    <header class="ph"><h3>对象管理器</h3>
      <button aria-label="图"><svg width="16" height="16"><path d="M1 1v14h15"/><path class="rs a" stroke-width="2" d="M2 3l5 6 3-4 5 5M2 9l4-5 5 5 4-4"/></svg></button>
      <button aria-label="添加"><svg width="18" height="16"><path fill="#fff" stroke="#1a6fe0" stroke-width="2" d="M1 1h14v9h-3v4l-3-4H1z"/><path class="rs" stroke-width="2" d="M8 2v7M4 5h8"/></svg></button>
      <button aria-label="菜单"><svg width="12" height="10"><path class="k" d="M1 3h10L6 8z"/></svg></button>
      <button aria-label="固定"><svg width="10" height="12"><path d="M3 2h4v5H3zM1 7h8M5 7v4M6 2v5"/></svg></button>
      <button class="x" aria-label="关闭"><svg width="10" height="10"><path d="M1 1l8 8M9 1L1 9"/></svg></button>
    </header>
    <ul class="tree">
      <li class="sel"><span class="mn"></span><svg width="20" height="18"><path fill="#c99632" stroke="#8a6414" d="M1 3h6l2 2h8v10H2z"/><path fill="#fbdf8d" stroke="#a77c1e" d="M5 7h14l-3 8H2z"/></svg>Graph1</li>
      <li class="l1"><span class="mn"></span><label><input type="checkbox" checked>Layer1</label></li>
      <li class="l2"><label><input type="checkbox" checked><i class="sw"></i><b>C</b></label></li>
    </ul>
    <header class="ph apps"><h3>Apps</h3>
      <button aria-label="菜单"><svg width="12" height="10"><path class="k" d="M1 3h10L6 8z"/></svg></button>
      <button aria-label="固定"><svg width="10" height="12"><path d="M3 2h4v5H3zM1 7h8M5 7v4M6 2v5"/></svg></button>
      <button class="x" aria-label="关闭"><svg width="10" height="10"><path d="M1 1l8 8M9 1L1 9"/></svg></button>
    </header>
    <div class="gallery">
      <nav class="tabs">
        <svg class="edge" width="32" height="500"><path fill="#fff" stroke="none" d="M32 68L5 83v26l27 14z"/><path d="M32 0v68L5 83v26l27 14M19 116l-14 8v43l27 15M19 174l-14 7v28l27 14v277"/></svg>
        <button class="ar" aria-label="首"><svg width="10" height="8"><path d="M0 1h9"/><path class="k" d="M0 7h8L4 3z"/></svg></button>
        <button class="ar" aria-label="上"><svg width="10" height="8"><path class="k" d="M0 6h8L4 2z"/></svg></button>
        <button class="ar" aria-label="下"><svg width="10" height="8"><path class="k" d="M0 2h8L4 6z"/></svg></button>
        <button class="ar" aria-label="末"><svg width="10" height="8"><path class="k" d="M0 1h8L4 5z"/><path d="M0 7h9"/></svg></button>
        <button class="tab t1">所有</button><button class="tab t2">连接器</button><button class="tab t3">统计</button>
      </nav>
      <div class="list">
        <button><svg width="40" height="40"><path fill="#e9f2f8" stroke="#7fb1cf" d="M1 1h34v33H1z"/><path fill="#0b84cc" stroke="none" d="M1 1h34v4H1z"/><path fill="#c6c6c6" stroke="none" d="M4 7h11v14H4zM18 8h6v1h-6zM25 7h7v3h-7zM4 26h4v2H4zM4 30h4v2H4zM10 25h5v3h-5z"/><path class="w" stroke="#ccc" d="M19 12h12v8H19z"/><circle cx="28" cy="28" r="11" fill="#3cb93c" stroke="#2a9f2a"/><path d="M28 21v14M21 28h14" stroke="#fff" stroke-width="5"/></svg><span><span class="zh">添加</span>App</span></button>
        <button><svg width="40" height="40"><path fill="#ffe7bd" stroke="none" d="M1 1h38v38H1z"/><path class="r" fill-opacity=".9" d="M3 21l4-9 3 6 5-14 4 10 4-7 4 8 4-6 4 7 2-3v12H3z"/><path stroke="#ffb0a0" d="M3 22h36"/><circle cx="22" cy="23" r="7" fill="#e85b5f" stroke="#32253a" stroke-width="4"/><path d="M27 29l6 6" stroke="#32253a" stroke-width="5"/></svg>Theme<br>Preview</button>
        <button><svg width="40" height="40"><path fill="#e4c33d" stroke="#cda92a" d="M17 2l4 9 9 1-6 8 1 9-9-4-10 5 3-10-6-7 9-2z"/><path d="M21 20l18 18" stroke="#3d4453" stroke-width="2"/><path fill="#ecc64a" stroke="none" d="M29 2l1 3 3 1-3 1-1 3-1-3-3-1 3-1zM4 26l1 3 3 1-3 1-1 3-1-3-3-1 3-1z"/></svg>Stats<br>Advisor</button>
        <button><svg width="40" height="40"><path fill="#294879" stroke="none" d="M1 1h39v39H1z"/><path stroke="#fff" stroke-width="2" d="M14 10h10M12 13h11M10 16h12M8 19h13M7 22h13M6 25h13M5 28h13M4 31h13"/><path fill="#b5d9ff" stroke="#fff" d="M24 9h15l-2 6h-9l-2 4h9l-2 5h-8l-3 11h-5z"/></svg>Speedy Fit</button>
        <button><svg width="40" height="40"><path fill="#0661cc" stroke="none" d="M0 0h40v40H0z"/><path stroke="#b9dbff" stroke-width="2" d="M3 39V3M1 37h38"/><path fill="#fff" stroke="none" d="M0 7l3-6 3 6zM32 34l7 3-7 3z"/><path stroke="#f1148f" stroke-width="3" fill="none" d="M5 35c16-2 25-4 31-30"/><g fill="#fff" stroke="none"><circle cx="9" cy="34" r="2"/><circle cx="17" cy="33" r="2"/><circle cx="24" cy="30" r="2"/><circle cx="29" cy="23" r="2"/><circle cx="34" cy="16" r="2"/><circle cx="36" cy="5" r="2"/></g></svg>Simple Fit</button>
        <button aria-label="Word"><svg width="40" height="40"><path fill="#fff" stroke="#185a9b" stroke-width="2" d="M26 7h11v26H26M28 12h8M28 17h8"/><path fill="#185a9b" stroke="none" d="M10 6l18-4v32l-18-4z"/><path stroke="#fff" stroke-width="2" fill="none" d="M13 12l3 10 3-9 3 9 3-10"/></svg></button>
      </div>
      <div class="scroll"><svg width="12" height="10"><path d="M1 8l5-5 5 5"/></svg><i></i><svg width="12" height="10"><path d="M1 2l5 5 5-5"/></svg></div>
    </div>
  </aside>
</main>

<footer class="status">
  <svg class="clip" width="42" height="42"><path fill="#cfe0f5" stroke="#2b7de0" stroke-width="2" d="M1 5h32v33H1z"/><path fill="#1768d2" stroke="none" d="M12 7V4h4a2 2 0 012-3 2 2 0 012 3h4v3z"/><path d="M10 15a9 9 0 11-1 9M9 12v5h5M18 15v6l4 4" fill="none" stroke="#e74747" stroke-width="2"/><circle cx="32" cy="32" r="9" fill="#1768d2"/><circle cx="31" cy="31" r="4" fill="none" stroke="#fff" stroke-width="2"/><path d="M34 34l4 4" stroke="#fff" stroke-width="3"/></svg>
  <span class="msg">&lt;&lt; <b class="zh">最近打开的文件</b> (Ctrl+F1)</span>
  <span class="c1">--</span><span class="gap"></span><span>AU : <b class="zh">开</b></span><span>Light Grids</span><span>1:[Book1]<b class="zh">输出数据</b>!Col(C)[1:9]</span><span>17KB - [Graph1]1!</span><span><b class="zh">弧度</b></span>
  <span class="rz"><svg width="12" height="12"><path fill="#bbb" d="M9 0h3v3H9zM5 4h3v3H5zM9 4h3v3H9zM0 9h3v3H0zM5 9h3v3H5zM9 9h3v3H9z"/></svg></span>
</footer>
<div class="mark"><div><b>我</b><b>爱</b><b>分</b><b>享</b><b>网</b></div><strong>www.zhanshaoyi.com</strong></div>
</div>
</body>
</html>
```
FILE: styles.css
```css
* { box-sizing: border-box; }
body { margin: 0; font-family: "Noto Sans", "Noto Sans CJK SC", sans-serif; font-size: 15px; color: #000; }
button { font: inherit; color: inherit; border: 0; background: none; padding: 0; margin: 0; }
h1, h2, h3 { margin: 0; font-weight: 400; }
svg { display: block; flex: none; fill: none; stroke: #000; shape-rendering: crispEdges; }
.defs { position: absolute; width: 0; height: 0; }
.k { fill: #000; stroke: none; }
.w { fill: #fff; }
.n { stroke: none; }
.r { fill: #f02020; stroke: none; }
.rs, .rx { stroke: #f01010; }
.i { width: 16px; height: 16px; }
.a, .logo, .clip, .x svg, .search svg, .list svg { shape-rendering: auto; }
.g { stroke: #747986; }
.g .w { fill: #e9eaf1; }
.zh { font-family: "Noto Sans CJK SC", sans-serif; font-size: 17px; font-weight: 400; line-height: 1; }

.app { position: relative; display: flex; flex-direction: column; height: 100vh; border: 1px solid #666; background: #ebebfb; overflow: hidden; }

/* Title bar */
.title { display: flex; align-items: center; height: 37px; flex: none; background: #fff; padding-left: 8px; gap: 4px; }
.title h1 { flex: 1; font-size: 15px; white-space: nowrap; }
.wb { width: 58px; height: 37px; display: grid; place-items: center; margin-left: -4px; }

/* Menus */
.menus { height: 60px; flex: none; padding-left: 17px; position: relative; }
.menus::before { content: ""; position: absolute; left: 4px; top: 6px; width: 2px; height: 48px; background: repeating-linear-gradient(#aaa 0 2px, transparent 2px 4px); }
.menubar { display: flex; gap: 21px; height: 32px; align-items: center; padding-bottom: 4px; font-size: 17px; white-space: nowrap; }
.menubar span { font-size: 15px; font-family: "Noto Sans CJK SC", sans-serif; }
.menubar u { text-underline-offset: 2px; }
.search { display: flex; align-items: center; width: 244px; height: 26px; border: 1px solid #888; border-radius: 5px; background: #fff; padding-left: 3px; gap: 3px; margin-left: 1px; }
.search input { border: 0; background: none; outline: 0; width: 200px; font: 17px "Noto Sans", "Noto Sans CJK SC", sans-serif; padding: 0; }
.search input::placeholder { color: #111; opacity: 1; }

/* Horizontal toolbars */
.row { display: flex; height: 31px; flex: none; padding-top: 1px; }
.tb { display: flex; align-items: center; height: 30px; padding-left: 10px; position: relative; border-radius: 4px 0 0 4px; background: linear-gradient(#fbfbff, #e8e9f4 50%, #b7b8ce); border-bottom: 1px solid #9a9ab4; }
.tb::before { content: ""; position: absolute; left: 4px; top: 6px; width: 3px; height: 18px; background: repeating-linear-gradient(#a4a4b8 0 2px, transparent 2px 4px); }
.grow { flex: 1; }
.tiny { width: 40px; }
.b { width: 22px; height: 23px; flex: none; display: flex; align-items: center; justify-content: center; }
.row .d { width: 30px; padding-left: 3px; justify-content: flex-start; gap: 3px; }
.bottom .d { width: 31px; }
.d::after { content: ""; border: 3px solid transparent; border-top-color: #000; border-bottom: 0; }
.on { background: #cfe4f7; border: 1px solid #0078d7; }
.row .on { height: 26px; }
.s { width: 1px; height: 20px; margin: 0 4px 0 3px; background: #c2c2cc; flex: none; }
.cap { align-self: stretch; width: 12px; margin-left: 1px; display: flex; flex-direction: column; justify-content: flex-end; align-items: center; padding-bottom: 3px; background: linear-gradient(#cfcfe1, #bcbcd2 50%, #dedef0); border-radius: 0 4px 4px 0; flex: none; }
.two { justify-content: space-between; padding-top: 4px; margin-left: auto; }
.combo { display: flex; align-items: center; position: relative; background: #fff; height: 26px; }
.combo select { appearance: none; border: 0; background: none; font: inherit; color: #111; width: 100%; height: 100%; padding: 0 0 0 3px; opacity: 1; }
.combo::after { content: ""; position: absolute; right: 4px; top: 11px; border: 3px solid transparent; border-top-color: #111; border-bottom: 0; }
.zoomc { width: 72px; font-size: 16px; margin: 0 1px 0 4px; background: linear-gradient(90deg, #fff 60px, #dfe0ec 60px); }
.off { background: #f1f1f3; border: 1px solid #a9a9b2; }
.off select { color: #808080; }
.off::after { border-top-color: #777; }
.font { width: 160px; padding-left: 6px; font-size: 17px; margin-left: 1px; }
.size { width: 74px; margin: 0 3px 0 3px; font-size: 16px; }
.t { font: bold 17px/23px "Liberation Serif", serif; color: #686d7a; }
.t sup, .t sub { font-size: 8px; line-height: 8px; }
.t sup { align-self: flex-start; padding-top: 3px; }
.t sub { align-self: flex-end; padding-bottom: 3px; }
.ss { display: flex; flex-direction: column; }
.ss sup, .ss sub { padding: 0; }
.s2 { font-size: 14px; }
.s3 { font-size: 16px; }
.s4 { font-size: 20px; }
.tt { color: #000; }

/* Body */
.main { display: flex; flex: 1; min-height: 0; }
.dock { width: 26px; flex: none; display: flex; flex-direction: column; gap: 15px; padding-top: 1px; }
.dock button { width: 24px; height: 95px; background: #f0f0f0; border: solid #d5d5d5; border-width: 0 1px 1px 0; writing-mode: vertical-rl; text-orientation: sideways; text-align: left; padding-top: 2px; font-size: 17px; line-height: 23px; color: #666; white-space: nowrap; }
.dock .d1 { height: 152px; padding-top: 6px; }
.vcol { flex: none; display: flex; flex-direction: column; align-items: flex-start; }
.left { width: 36px; }
.right { width: 40px; }
.vt { position: relative; width: 26px; padding: 10px 0 0 1px; display: flex; flex-direction: column; background: linear-gradient(90deg, #f8f8ff, #e2e3f0 50%, #b0b1c8); border-radius: 4px 4px 0 0; border-left: 1px solid #a9a9bf; }
.vt::before { content: ""; position: absolute; left: 4px; top: 5px; width: 15px; height: 2px; background: repeating-linear-gradient(90deg, #a4a4b8 0 2px, transparent 2px 4px); }
.wide { width: 35px; }
.left .d { width: 31px; justify-content: flex-start; padding-left: 3px; gap: 3px; }
.vt .s { width: 18px; height: 1px; margin: 4px 0 3px 2px; }
.vcap { display: flex; justify-content: flex-end; align-items: center; height: 11px; gap: 2px; margin: 2px 0 0 -1px; background: linear-gradient(90deg, #d9d9ea, #b9b9cf); padding-right: 2px; }
.v2 { margin-top: 1px; padding-top: 9px; height: 129px; }
.v3 { flex: 1; margin-bottom: 1px; }
.v2 .vcap, .v3 .vcap, .v4 .vcap { margin-top: auto; }
.v4 { flex: 1; padding-top: 10px; margin-bottom: 1px; }
.center { flex: 1; min-width: 0; display: flex; flex-direction: column; }
.space { flex: 1; position: relative; background: #ababab; border: solid #696969; border-width: 2px 0 0 2px; margin-top: 1px; overflow: hidden; }
.bottom { height: 34px; padding: 2px 0; }
.fb { position: absolute; right: 15px; bottom: 12px; font-size: 22px; line-height: 28px; color: #0066cc; }

/* Graph window */
.win { position: absolute; left: 11px; top: 14px; width: 802px; background: #588ad3; border: 1px solid #4a6794; border-radius: 8px 8px 0 0; padding: 0 9px 9px 8px; }
.win header { display: flex; align-items: center; height: 37px; margin-right: -9px; }
.win h2 { flex: 1; font-size: 15px; padding: 4px 0 0 6px; }
.win header button { width: 45px; height: 34px; display: grid; place-items: center; }
.canvas { background: #bdbdbd; border: 1px solid #777; border-width: 1px 0 0 1px; display: flex; }
.page { position: relative; width: 722px; background: #fff; }
.chart { width: 100%; }
.chart text { font: 12px "Liberation Mono", monospace; fill: #000; stroke: none; }
.ax { stroke: #000; stroke-width: 1; }
.badge { position: absolute; left: 0; top: 0; width: 25px; height: 25px; background: #6699cc; border: 1px solid #aab; color: #fff; font: bold 19px/22px "Liberation Sans", sans-serif; text-align: center; }
.lock { position: absolute; left: 4px; top: 27px; }

/* Right panels */
.panels { width: 190px; flex: none; display: flex; flex-direction: column; }
.ph { display: flex; align-items: center; height: 31px; flex: none; margin-top: 1px; padding: 0 5px 0 4px; gap: 6px; background: linear-gradient(#bccddc, #d6e4f1); }
.ph h3 { flex: 1; font-size: 17px; line-height: 20px; padding-bottom: 2px; white-space: nowrap; }
.ph.apps { margin-top: 4px; }
.apps h3 { font-size: 15px; }
.tree { list-style: none; margin: 0; padding: 0; height: 89px; flex: none; background: #fff; border: 2px solid #646464; font: 14px Roboto, sans-serif; }
.tree li { display: flex; align-items: center; height: 22px; gap: 3px; padding-left: 2px; }
.tree label { display: flex; align-items: center; gap: 4px; }
.sel { background: #0078d7; color: #fff; outline: 1px dotted #cde; outline-offset: -1px; }
.tree .l1 { padding-left: 18px; }
.tree .l2 { padding-left: 48px; }
.mn { width: 12px; height: 12px; border: 1px solid #999; border-radius: 2px; background: linear-gradient(#3a5fb5, #3a5fb5) center / 8px 2px no-repeat, #f4f4f4; }
.tree li:not(:first-child) { position: relative; }
.tree li:not(:first-child)::before { content: ""; position: absolute; left: 8px; top: -5px; width: 10px; height: 16px; border: dotted #aaa; border-width: 0 0 1px 1px; }
.tree .l2::before { left: 24px; width: 18px; }
.tree input { appearance: none; margin: 0; width: 17px; height: 17px; border: 1px solid #333; background: #fff; display: grid; place-items: center; }
.tree input::after { content: ""; width: 10px; height: 5px; border: solid #444; border-width: 0 0 2px 2px; transform: rotate(-45deg); margin-top: -3px; }
.sw { width: 42px; height: 15px; background: #fdc896; border: 1px solid #a98159; }
.tree b { font-size: 16px; }
.gallery { flex: 1; min-height: 0; display: flex; background: #f0f0f0; border-bottom: 1px solid #999; margin-bottom: 1px; padding-right: 4px; }
.tabs { position: relative; width: 32px; flex: none; padding-top: 2px; overflow: hidden; }
.edge { position: absolute; left: 0; top: 0; stroke: #666; shape-rendering: auto; }
.ar { position: relative; display: block; height: 16px; padding-left: 12px; }
.tab { position: relative; display: block; writing-mode: vertical-rl; text-orientation: sideways; font-size: 15px; line-height: 18px; margin-left: 9px; }
.t1 { font-weight: 700; margin-top: 8px; height: 42px; }
.t2 { height: 60px; }
.t3 { height: 40px; }
.list { flex: 1; background: #fff; overflow: hidden; padding-top: 4px; margin-top: 1px; }
.list button { width: 94px; height: 94px; display: flex; flex-direction: column; align-items: center; line-height: 20px; gap: 3px; }
.scroll { width: 19px; background: #f0f0f0; display: flex; flex-direction: column; align-items: center; padding: 8px 0; }
.scroll svg { stroke: #444; stroke-width: 2; shape-rendering: auto; }
.scroll i { width: 19px; height: 211px; background: #cdcdcd; margin: 6px 0 auto; }

/* Status bar */
.status { position: relative; height: 27px; flex: none; display: flex; align-items: stretch; background: #f0f0f0; border-top: 1px solid #d4d4d4; white-space: nowrap; line-height: 27px; }
.status > span { padding: 0 6px 0 5px; border-left: 1px solid #c8c8c8; }
.status .msg { flex: 1; border: 0; padding-left: 46px; }
.status .gap { width: 5px; padding: 0; }
.status .c1 { width: 23px; }
.status .rz { width: 23px; display: flex; align-items: flex-end; padding: 0 3px 3px 8px; }
.rz svg { stroke: none; }
.clip { position: absolute; left: 3px; bottom: 0; stroke: none; }

/* Site mark laid over the window */
.mark { position: absolute; left: 265px; top: 149px; color: #f01414; display: flex; flex-direction: column; gap: 8px; white-space: nowrap; }
.mark div { display: flex; gap: 14px; font: 900 22px/26px "Noto Sans CJK SC", sans-serif; }
.mark b { font-weight: 900; }
.mark strong { font: bold 18px/20px "Liberation Serif", serif; }
```
